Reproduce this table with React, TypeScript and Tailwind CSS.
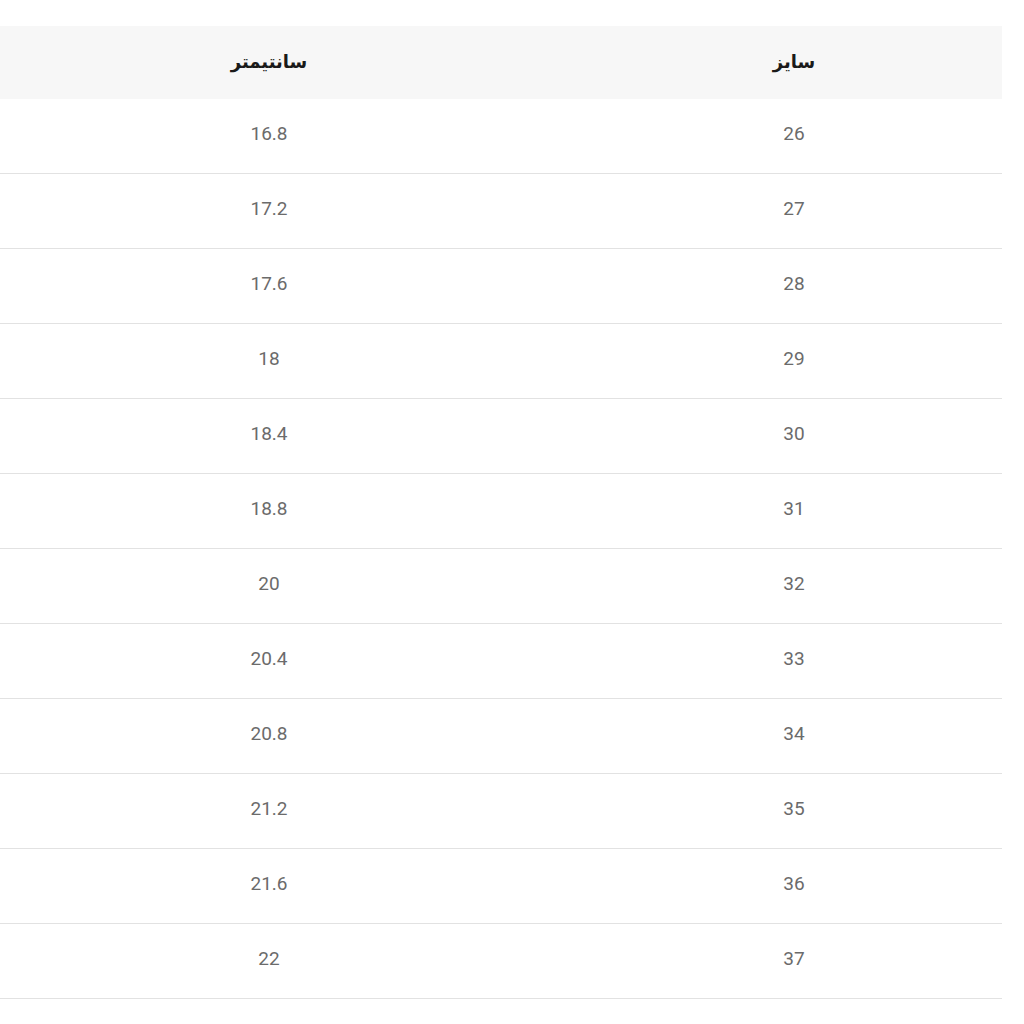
const rows = [
  ["26", "16.8"],
  ["27", "17.2"],
  ["28", "17.6"],
  ["29", "18"],
  ["30", "18.4"],
  ["31", "18.8"],
  ["32", "20"],
  ["33", "20.4"],
  ["34", "20.8"],
  ["35", "21.2"],
  ["36", "21.6"],
  ["37", "22"],
];

export default function App() {
  return (
    <div className="min-h-screen bg-white pt-[26px]">
      <div dir="rtl" className="w-[1002px]">
        <div className="grid grid-cols-[416px_586px] h-[73px] bg-[#f7f7f7] items-center font-['DejaVu_Sans',sans-serif] font-bold text-[18px] text-[#1a1a1a]">
          <div className="text-center -mt-[2px]">سایز</div>
          <div className="text-center pr-[48px] -mt-[2px]">سانتیمتر</div>
        </div>
        {rows.map(([size, cm]) => (
          <div
            key={size}
            className="grid grid-cols-[416px_586px] h-[75px] items-center border-b border-[#e2e2e2] font-['Roboto',sans-serif] text-[19px] text-[#6b6b6b]"
          >
            <div className="text-center -mt-[4px]">{size}</div>
            <div className="text-center pr-[48px] -mt-[4px]">{cm}</div>
          </div>
        ))}
      </div>
    </div>
  );
}
